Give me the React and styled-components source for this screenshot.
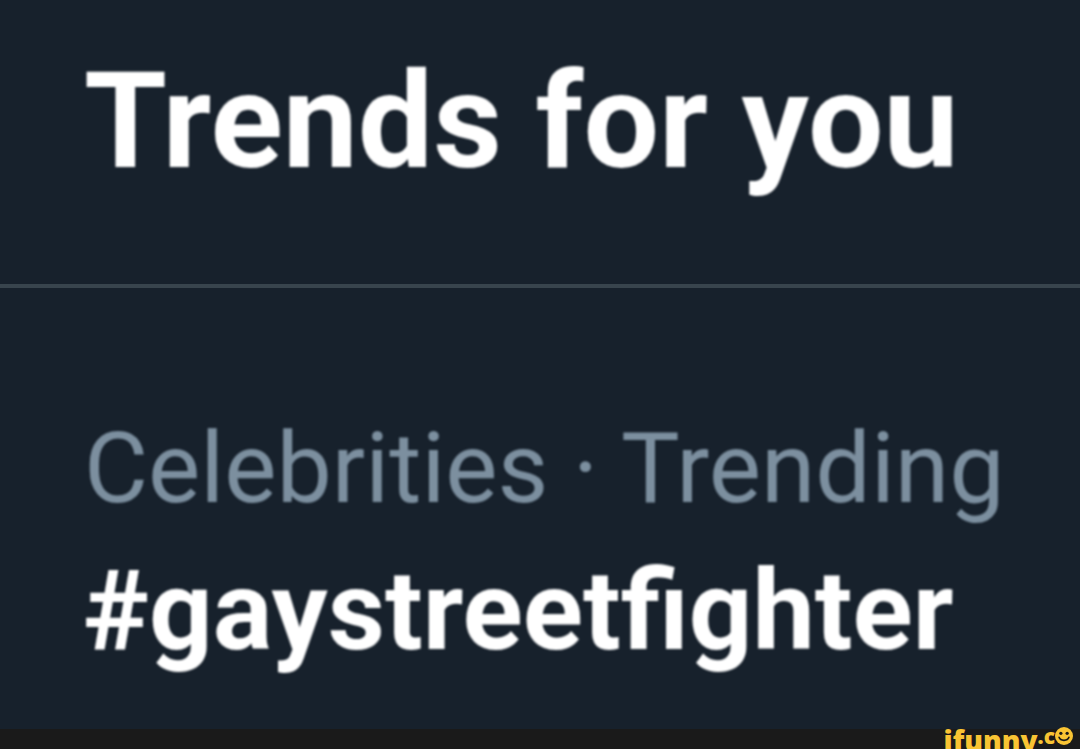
import React from "react";
import styled, { createGlobalStyle } from "styled-components";

const GlobalStyle = createGlobalStyle`
  html, body {
    margin: 0;
    padding: 0;
    background: #17212c;
    overflow: hidden;
  }
`;

const Page = styled.div`
  width: 1080px;
  height: 749px;
  display: flex;
  flex-direction: column;
  font-family: Roboto, "Liberation Sans", sans-serif;
  background: #17212c;
`;

const Header = styled.div`
  height: 288px;
  box-sizing: border-box;
  padding: 47px 0 0 84px;
  border-bottom: 4px solid #38444d;
`;

const Heading = styled.h1`
  margin: 0;
  font-size: 134px;
  line-height: 150px;
  font-weight: 700;
  color: #ffffff;
  filter: blur(0.8px);
`;

const Trend = styled.div`
  flex: 1;
  padding: 0 0 0 84px;
  filter: blur(0.8px);
`;

const Meta = styled.div`
  margin-top: 126px;
  font-size: 98.5px;
  line-height: 110px;
  color: #7c8f9f;
`;

const Tag = styled.div`
  margin-top: 27px;
  margin-left: -1px;
  font-size: 111.5px;
  line-height: 120px;
  font-weight: 700;
  color: #ffffff;
`;

const Footer = styled.div`
  height: 20px;
  background: #1a1a1a;
  display: flex;
  justify-content: flex-end;
  align-items: flex-start;
  padding-right: 7px;
`;

const Brand = styled.span`
  font-family: "Open Sans", Roboto, sans-serif;
  font-size: 28px;
  line-height: 30px;
  font-weight: 800;
  color: #f9c433;
  margin-top: -4px;
  height: 24px;
  overflow: hidden;
`;

const BrandEnd = styled.span`
  font-family: "Open Sans", Roboto, sans-serif;
  font-size: 21px;
  line-height: 20px;
  font-weight: 800;
  color: #f9c433;
  margin-top: -3px;
`;

const Smiley = styled.svg`
  width: 18px;
  height: 18px;
  margin-top: -2px;
  flex: none;
`;

export default function App() {
  return (
    <Page>
      <GlobalStyle />
      <Header>
        <Heading>Trends for you</Heading>
      </Header>
      <Trend>
        <Meta>Celebrities · Trending</Meta>
        <Tag>#gaystreetfighter</Tag>
      </Trend>
      <Footer>
        <Brand>ifunny</Brand>
        <BrandEnd>.c</BrandEnd>
        <Smiley viewBox="0 0 20 20">
          <circle cx="10" cy="10" r="10" fill="#f9c433" />
          <circle cx="6.5" cy="7" r="1.8" fill="#1a1a1a" />
          <circle cx="13.5" cy="7" r="1.8" fill="#1a1a1a" />
          <path d="M4.5 11.5 C6 16 14 16 15.5 11.5" fill="none" stroke="#1a1a1a" strokeWidth="1.8" strokeLinecap="round" />
        </Smiley>
      </Footer>
    </Page>
  );
}
